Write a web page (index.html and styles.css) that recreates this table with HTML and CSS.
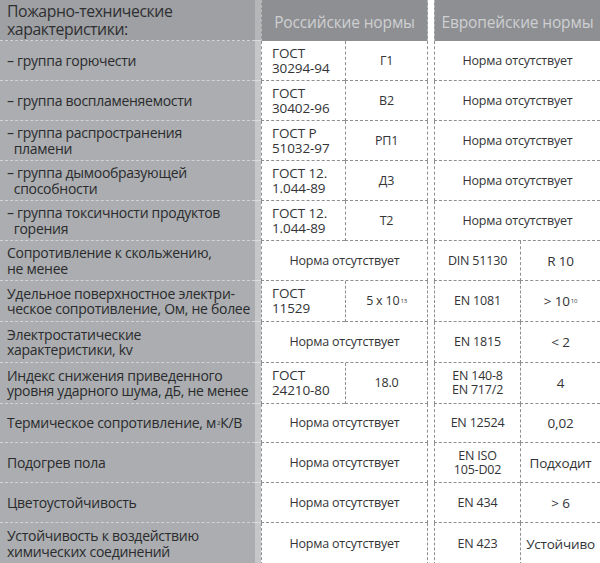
FILE: index.html
```html
<!DOCTYPE html>
<html lang="ru">
<head>
<meta charset="utf-8">
<title>Пожарно-технические характеристики</title>
<link rel="stylesheet" href="styles.css">
</head>
<body>
<div class="sheet">
  <div class="row head">
    <div class="lab hlab">Пожарно-технические<br>характеристики:</div>
    <div class="gap hgap"></div>
    <div class="hnorm ru">Российские нормы</div>
    <div class="sep"></div>
    <div class="hnorm eu">Европейские нормы</div>
  </div>

  <div class="row r40">
    <div class="lab">– группа горючести</div>
    <div class="gap"></div>
    <div class="cell gost ru1">ГОСТ<br>30294-94</div>
    <div class="cell ru2">Г1</div>
    <div class="sep"></div>
    <div class="cell eu">Норма отсутствует</div>
  </div>

  <div class="row r40">
    <div class="lab">– группа воспламеняемости</div>
    <div class="gap"></div>
    <div class="cell gost ru1">ГОСТ<br>30402-96</div>
    <div class="cell ru2">В2</div>
    <div class="sep"></div>
    <div class="cell eu">Норма отсутствует</div>
  </div>

  <div class="row r40">
    <div class="lab">– группа распространения<br>&nbsp;&nbsp;пламени</div>
    <div class="gap"></div>
    <div class="cell gost ru1">ГОСТ Р<br>51032-97</div>
    <div class="cell ru2">РП1</div>
    <div class="sep"></div>
    <div class="cell eu">Норма отсутствует</div>
  </div>

  <div class="row r40">
    <div class="lab">– группа дымообразующей<br>&nbsp;&nbsp;способности</div>
    <div class="gap"></div>
    <div class="cell gost ru1">ГОСТ 12.<br>1.044-89</div>
    <div class="cell ru2">Д3</div>
    <div class="sep"></div>
    <div class="cell eu">Норма отсутствует</div>
  </div>

  <div class="row r40">
    <div class="lab">– группа токсичности продуктов<br>&nbsp;&nbsp;горения</div>
    <div class="gap"></div>
    <div class="cell gost ru1">ГОСТ 12.<br>1.044-89</div>
    <div class="cell ru2">Т2</div>
    <div class="sep"></div>
    <div class="cell eu">Норма отсутствует</div>
  </div>

  <div class="row r40">
    <div class="lab">Сопротивление к скольжению,<br>не менее</div>
    <div class="gap"></div>
    <div class="cell ru">Норма отсутствует</div>
    <div class="sep"></div>
    <div class="cell eu1">DIN 51130</div>
    <div class="cell eu2">R 10</div>
  </div>

  <div class="row r41">
    <div class="lab">Удельное поверхностное электри-<br>ческое сопротивление, Ом, не более</div>
    <div class="gap"></div>
    <div class="cell gost ru1">ГОСТ<br>11529</div>
    <div class="cell ru2">5 x 10<sup>13</sup></div>
    <div class="sep"></div>
    <div class="cell eu1">EN 1081</div>
    <div class="cell eu2">&gt; 10<sup>10</sup></div>
  </div>

  <div class="row r41">
    <div class="lab">Электростатические<br>характеристики, kv</div>
    <div class="gap"></div>
    <div class="cell ru">Норма отсутствует</div>
    <div class="sep"></div>
    <div class="cell eu1">EN 1815</div>
    <div class="cell eu2">&lt; 2</div>
  </div>

  <div class="row r41">
    <div class="lab">Индекс снижения приведенного<br>уровня ударного шума, дБ, не менее</div>
    <div class="gap"></div>
    <div class="cell gost ru1">ГОСТ<br>24210-80</div>
    <div class="cell ru2">18.0</div>
    <div class="sep"></div>
    <div class="cell eu1 two">EN 140-8<br>EN 717/2</div>
    <div class="cell eu2">4</div>
  </div>

  <div class="row r39">
    <div class="lab">Термическое сопротивление, м<sup>2</sup> К/В</div>
    <div class="gap"></div>
    <div class="cell ru">Норма отсутствует</div>
    <div class="sep"></div>
    <div class="cell eu1">EN 12524</div>
    <div class="cell eu2">0,02</div>
  </div>

  <div class="row r40">
    <div class="lab">Подогрев пола</div>
    <div class="gap"></div>
    <div class="cell ru">Норма отсутствует</div>
    <div class="sep"></div>
    <div class="cell eu1 two">EN ISO<br>105-D02</div>
    <div class="cell eu2">Подходит</div>
  </div>

  <div class="row r40">
    <div class="lab">Цветоустойчивость</div>
    <div class="gap"></div>
    <div class="cell ru">Норма отсутствует</div>
    <div class="sep"></div>
    <div class="cell eu1">EN 434</div>
    <div class="cell eu2">&gt; 6</div>
  </div>

  <div class="row r40 last">
    <div class="lab">Устойчивость к воздействию<br>химических соединений</div>
    <div class="gap"></div>
    <div class="cell ru">Норма отсутствует</div>
    <div class="sep"></div>
    <div class="cell eu1">EN 423</div>
    <div class="cell eu2">Устойчиво</div>
  </div>
</div>
</body>
</html>
```

FILE: styles.css
```css
* { box-sizing: border-box; }

html, body {
  margin: 0;
  padding: 0;
  background: #ffffff;
}

body {
  font-family: "Open Sans", "Noto Sans", "DejaVu Sans", sans-serif;
  color: #2f3032;
}

.sheet {
  width: 600px;
  height: 563px;
  overflow: hidden;
}

.row {
  display: grid;
  grid-template-columns: 255px 6px 84px 83px 6px 86px 80px;
  height: 40px;
}

.row.head { height: 41px; }
.row.r41 { height: 41px; }
.row.r39 { height: 39px; }
.row.last { height: 42px; }

.lab {
  grid-column: 1;
  background: #abadb0;
  border-bottom: 1px dashed #d2d3d5;
  padding-left: 7px;
  display: flex;
  align-items: center;
  font-size: 14px;
  line-height: 15.5px;
  letter-spacing: -0.28px;
  color: #2a2b2d;
  white-space: nowrap;
}

.hlab {
  background: #9ea0a3;
  font-size: 15.8px;
  line-height: 17.5px;
  letter-spacing: -0.42px;
  color: #2e2f32;
  padding-top: 1px;
}

.gap {
  grid-column: 2;
  background: #c6c7c9;
  border-bottom: 1px dashed #dcdddf;
}

.hgap { background: #b4b6b8; }

.sep {
  grid-column: 5;
  background: #ffffff;
}

.hnorm {
  background: #8d8f92;
  color: #cfd0d2;
  font-size: 15.5px;
  letter-spacing: -0.15px;
  display: flex;
  align-items: center;
  justify-content: center;
  border-left: 1px dashed #b8b9bb;
  padding-top: 2px;
}

.hnorm.ru { grid-column: 3 / 5; border-right: 1px dashed #b8b9bb; }
.hnorm.eu { grid-column: 6 / 8; }

.cell {
  background: #ffffff;
  border-bottom: 1px dashed #8e8f91;
  border-left: 1px dashed #8e8f91;
  display: flex;
  align-items: center;
  justify-content: center;
  text-align: center;
  font-size: 12.5px;
  line-height: 14px;
  letter-spacing: -0.2px;
  color: #333436;
  white-space: nowrap;
}

.cell.gost {
  justify-content: flex-start;
  text-align: left;
  padding-left: 10px;
  font-size: 13.5px;
  line-height: 15px;
  letter-spacing: -0.1px;
}

.ru1 { grid-column: 3; }
.ru2 { grid-column: 4; border-right: 1px dashed #8e8f91; }
.ru { grid-column: 3 / 5; border-right: 1px dashed #8e8f91; }
.eu { grid-column: 6 / 8; }
.eu1 { grid-column: 6; }
.eu2 { grid-column: 7; font-size: 13.5px; }

.two { line-height: 14px; }

sup {
  font-size: 6px;
  line-height: 0;
  vertical-align: 6px;
  margin-left: 1px;
}
```
